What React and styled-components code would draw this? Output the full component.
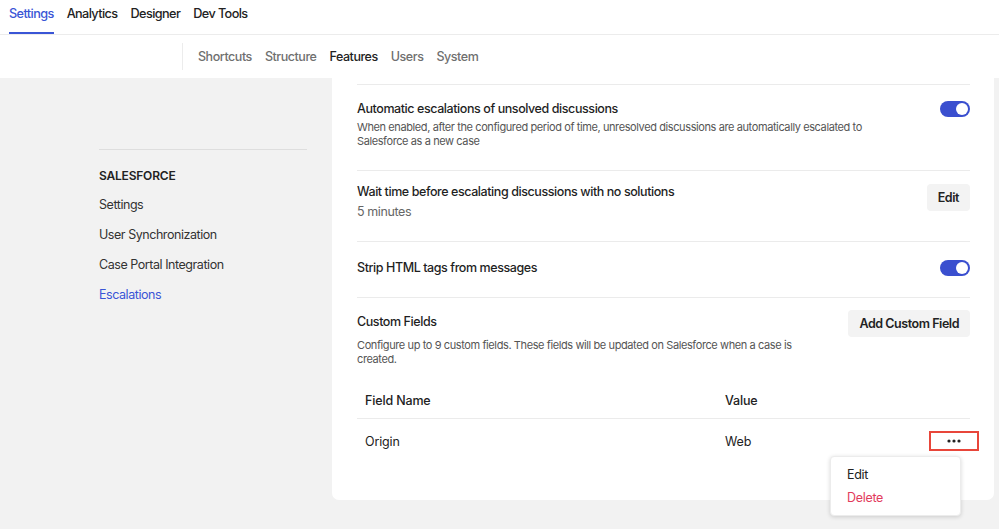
import React from 'react';
import styled, { createGlobalStyle } from 'styled-components';

const GlobalStyle = createGlobalStyle`
  html, body {
    margin: 0;
    padding: 0;
    height: 529px;
    overflow: hidden;
    background: #f2f2f2;
    font-family: Inter, "Noto Sans", Arial, sans-serif;
    -webkit-font-smoothing: antialiased;
  }
  * { box-sizing: border-box; }
`;

const Page = styled.div`
  display: flex;
  flex-direction: column;
  height: 529px;
`;

const TopNav = styled.nav`
  display: flex;
  gap: 13px;
  height: 35px;
  padding-left: 9px;
  background: #fff;
  border-bottom: 1px solid #ececec;
`;

const TopTab = styled.a`
  display: flex;
  align-items: center;
  height: 34px;
  padding-bottom: 6px;
  font-size: 12.7px;
  font-weight: 500;
  letter-spacing: -0.6px;
  color: ${p => (p.$active ? '#3a55d6' : '#222')};
  border-bottom: 2px solid ${p => (p.$active ? '#3a55d6' : 'transparent')};
  text-decoration: none;
`;

const SubNav = styled.div`
  display: flex;
  align-items: center;
  height: 43px;
  padding-left: 182px;
  background: #fff;
`;

const SubTabs = styled.div`
  display: flex;
  align-items: center;
  gap: 13px;
  height: 27px;
  padding-left: 15px;
  border-left: 1px solid #ececec;
`;

const SubTab = styled.span`
  font-size: 12.5px;
  font-weight: 500;
  letter-spacing: -0.45px;
  color: ${p => (p.$active ? '#222' : '#6f6f6f')};
`;

const Main = styled.div`
  display: flex;
  flex: 1;
  min-height: 0;
`;

const Sidebar = styled.aside`
  width: 332px;
  flex-shrink: 0;
  padding: 71px 25px 0 99px;
`;

const SideDivider = styled.div`
  height: 1px;
  background: #dedede;
  margin-bottom: 16px;
`;

const SideHeading = styled.div`
  font-size: 12px;
  font-weight: 600;
  letter-spacing: -0.2px;
  color: #222;
  line-height: 20px;
  margin-bottom: 9px;
`;

const SideLink = styled.a`
  display: block;
  font-size: 12.5px;
  letter-spacing: -0.45px;
  line-height: 20px;
  margin-bottom: 10px;
  color: ${p => (p.$active ? '#3a55d6' : '#333')};
  text-decoration: none;
`;

const Card = styled.section`
  width: 662px;
  height: 422px;
  background: #fff;
  border-radius: 0 0 7px 7px;
  padding: 6px 24px 0 25px;
`;

const Row = styled.div`
  display: flex;
  justify-content: space-between;
  align-items: flex-start;
  border-top: 1px solid #ebebeb;
  padding: ${p => p.$pad};
`;

const RowText = styled.div`
  display: flex;
  flex-direction: column;
  max-width: ${p => p.$max || 'none'};
`;

const Title = styled.div`
  font-size: 12.5px;
  font-weight: 500;
  letter-spacing: -0.42px;
  line-height: 16px;
  color: #1f1f1f;
  margin-top: ${p => p.$mt || '0'};
`;

const Desc = styled.div`
  font-size: 11px;
  letter-spacing: -0.4px;
  line-height: 14px;
  color: #555;
  margin-top: ${p => p.$mt || '3px'};
`;

const Value = styled.div`
  font-size: 12.5px;
  letter-spacing: -0.4px;
  line-height: 18px;
  color: #666;
  margin-top: 3px;
`;

const Toggle = styled.span`
  position: relative;
  display: inline-block;
  width: 30px;
  height: 16px;
  border-radius: 8px;
  background: #3a4fcf;
  flex-shrink: 0;

  &::after {
    content: '';
    position: absolute;
    top: 2px;
    right: 2px;
    width: 12px;
    height: 12px;
    border-radius: 50%;
    background: #fff;
  }
`;

const GhostButton = styled.button`
  height: 27px;
  padding: 0 11px;
  border: none;
  border-radius: 4px;
  background: #f3f3f3;
  font-family: inherit;
  font-size: 12.5px;
  font-weight: 600;
  letter-spacing: -0.45px;
  color: #222;
  flex-shrink: 0;
`;

const Table = styled.div`
  margin-top: 16px;
`;

const TableRow = styled.div`
  display: grid;
  grid-template-columns: 360px 1fr 60px;
  align-items: center;
  height: ${p => p.$h};
  border-bottom: ${p => (p.$head ? '1px solid #ebebeb' : 'none')};
`;

const Cell = styled.div`
  padding-left: 8px;
  font-size: 12.5px;
  letter-spacing: -0.15px;
  font-weight: ${p => (p.$head ? 500 : 400)};
  color: #222;
`;

const ActionCell = styled.div`
  position: relative;
  display: flex;
  justify-content: flex-end;
  margin-right: -9px;
`;

const MoreButton = styled.button`
  display: flex;
  align-items: center;
  justify-content: center;
  width: 50px;
  height: 20px;
  padding: 0;
  border: 2px solid #e8463a;
  background: #fff;
`;

const Menu = styled.div`
  position: absolute;
  top: 25px;
  right: 18px;
  width: 131px;
  padding: 6px 0;
  background: #fff;
  border-radius: 4px;
  box-shadow: 0 1px 4px rgba(0, 0, 0, 0.16);
  border: 1px solid #ececec;
  z-index: 2;
`;

const MenuItem = styled.div`
  padding: 0 16px;
  line-height: 23px;
  font-size: 12.5px;
  letter-spacing: -0.3px;
  color: ${p => (p.$danger ? '#e23a5c' : '#222')};
`;

const Dots = () => (
  <svg width="14" height="4" viewBox="0 0 14 4">
    <circle cx="2" cy="2" r="1.6" fill="#222" />
    <circle cx="7" cy="2" r="1.6" fill="#222" />
    <circle cx="12" cy="2" r="1.6" fill="#222" />
  </svg>
);

export default function App() {
  return (
    <Page>
      <GlobalStyle />
      <TopNav>
        <TopTab $active>Settings</TopTab>
        <TopTab>Analytics</TopTab>
        <TopTab>Designer</TopTab>
        <TopTab>Dev Tools</TopTab>
      </TopNav>
      <SubNav>
        <SubTabs>
          <SubTab>Shortcuts</SubTab>
          <SubTab>Structure</SubTab>
          <SubTab $active>Features</SubTab>
          <SubTab>Users</SubTab>
          <SubTab>System</SubTab>
        </SubTabs>
      </SubNav>
      <Main>
        <Sidebar>
          <SideDivider />
          <SideHeading>SALESFORCE</SideHeading>
          <SideLink>Settings</SideLink>
          <SideLink>User Synchronization</SideLink>
          <SideLink>Case Portal Integration</SideLink>
          <SideLink $active>Escalations</SideLink>
        </Sidebar>
        <Card>
          <Row $pad="16px 0 22px">
            <RowText $max="520px">
              <Title>Automatic escalations of unsolved discussions</Title>
              <Desc>
                When enabled, after the configured period of time, unresolved discussions are automatically escalated to
                Salesforce as a new case
              </Desc>
            </RowText>
            <Toggle />
          </Row>
          <Row $pad="13px 0 20px">
            <RowText>
              <Title>Wait time before escalating discussions with no solutions</Title>
              <Value>5 minutes</Value>
            </RowText>
            <GhostButton>Edit</GhostButton>
          </Row>
          <Row $pad="18px 0 21px">
            <Title>Strip HTML tags from messages</Title>
            <Toggle />
          </Row>
          <Row $pad="12px 0 0">
            <RowText $max="440px">
              <Title $mt="4px">Custom Fields</Title>
              <Desc $mt="8px">
                Configure up to 9 custom fields. These fields will be updated on Salesforce when a case is created.
              </Desc>
            </RowText>
            <GhostButton>Add Custom Field</GhostButton>
          </Row>
          <Table>
            <TableRow $head $h="37px">
              <Cell $head>Field Name</Cell>
              <Cell $head>Value</Cell>
              <div />
            </TableRow>
            <TableRow $h="44px">
              <Cell>Origin</Cell>
              <Cell>Web</Cell>
              <ActionCell>
                <MoreButton aria-label="More">
                  <Dots />
                </MoreButton>
                <Menu>
                  <MenuItem>Edit</MenuItem>
                  <MenuItem $danger>Delete</MenuItem>
                </Menu>
              </ActionCell>
            </TableRow>
          </Table>
        </Card>
      </Main>
    </Page>
  );
}
